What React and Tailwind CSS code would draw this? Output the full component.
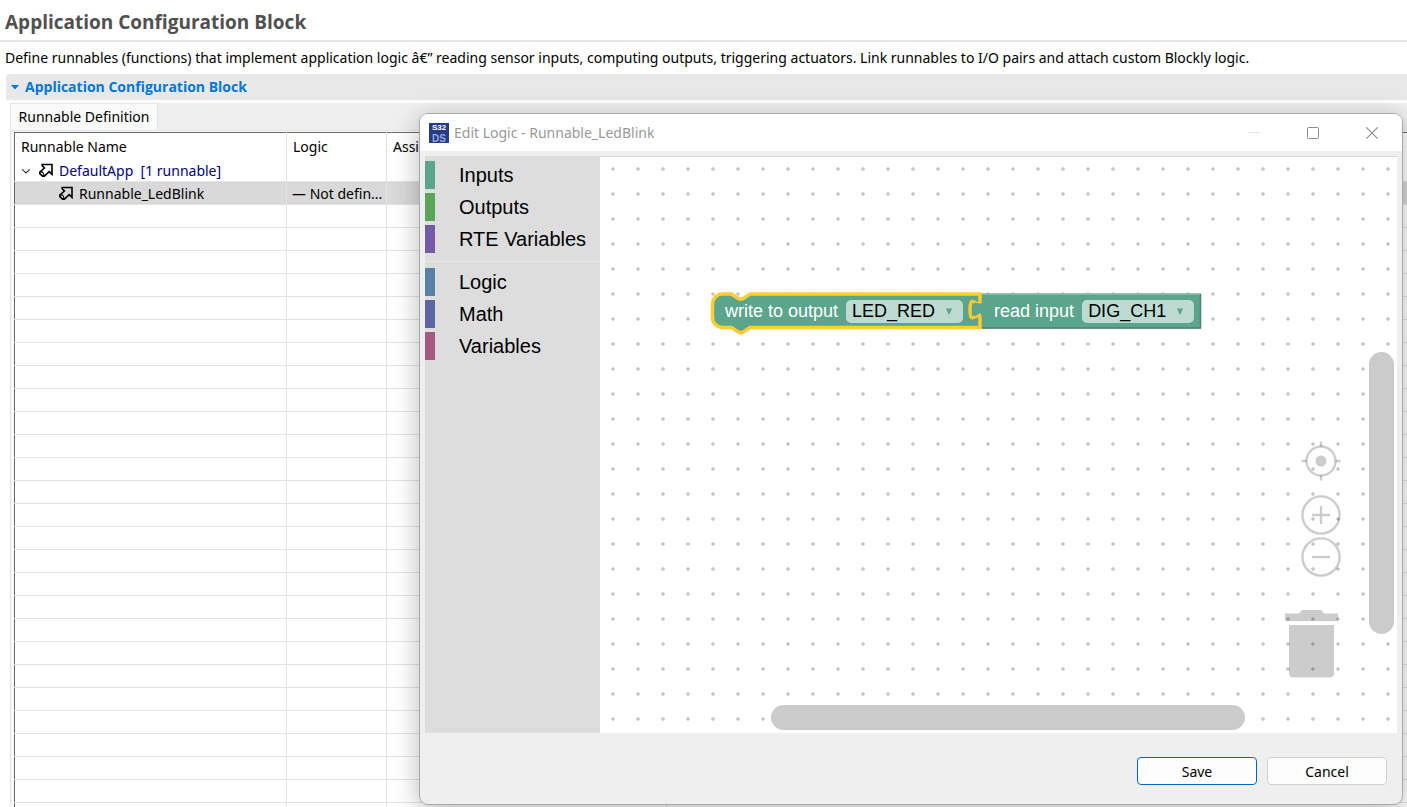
const UI = "font-['Noto_Sans','Open_Sans',sans-serif]";
const HEADING = "font-['Open_Sans','Noto_Sans',sans-serif]";
const BLOCK = "font-['Liberation_Sans',Arial,sans-serif]";

const inputs = [
  { name: "Inputs", color: "bg-[#5ba58c]" },
  { name: "Outputs", color: "bg-[#5ba55b]" },
  { name: "RTE Variables", color: "bg-[#745ba5]" },
];
const general = [
  { name: "Logic", color: "bg-[#5b80a5]" },
  { name: "Math", color: "bg-[#5b67a5]" },
  { name: "Variables", color: "bg-[#a55b80]" },
];

function RunnableIcon() {
  return (
    <svg className="size-4 shrink-0" viewBox="0 1 16 16" fill="none" stroke="#000" strokeWidth="1.6" aria-hidden="true">
      <path d="M4.200 2.500H14V12.400L11.200 9.700L6.400 14.200H4.600L1.800 11.600V10.200L6.400 6L4.200 3.700Z" />
      <path d="M2 10.200Q4.200 9.400 5.200 11Q6.200 12.400 5.600 14" strokeWidth="1.100" />
    </svg>
  );
}

function AppLogo() {
  return (
    <svg className="size-5 shrink-0" viewBox="0 0 20 20" aria-hidden="true">
      <rect width="20" height="20" fill="#263c86" />
      <text x="10" y="7" textAnchor="middle" fontSize="8" fontWeight="700" fill="#fff" fontFamily="Liberation Sans, sans-serif">S32</text>
      <text x="10" y="19" textAnchor="middle" fontSize="10" fontWeight="700" fill="#9aa9dc" fontFamily="Liberation Sans, sans-serif">DS</text>
    </svg>
  );
}

function Category({ name, color }) {
  return (
    <li>
      <button type="button" className="flex h-7 w-full items-center gap-6 text-left">
        <span className={`h-7 w-2.5 ${color}`} />
        <span>{name}</span>
      </button>
    </li>
  );
}

function Field({ label, value, width }) {
  return (
    <label className="flex items-center gap-2 whitespace-nowrap text-white">
      {label}
      <span className="relative block">
        <select className={`block h-[23px] appearance-none rounded-[5px] bg-[#bddbd1] pl-1.5 text-black ${width}`}>
          <option>{value}</option>
        </select>
        <svg className="pointer-events-none absolute right-2.5 top-2 h-2 w-2" viewBox="0 0 8 8" aria-hidden="true">
          <path d="M0.8 0.500H7.2L4 7Z" fill="#5ba58c" />
        </svg>
      </span>
    </label>
  );
}

function RunnableTable() {
  const cell = "border-r border-[#e3e3e3] px-1.5";
  return (
    <table className="w-full table-fixed border-collapse border-l border-t border-[#696969] bg-white">
      <colgroup>
        <col className="w-[272px]" />
        <col className="w-[100px]" />
        <col className="w-[280px]" />
        <col />
      </colgroup>
      <thead>
        <tr className="h-[26px] text-left">
          <th className={`${cell} pt-0.5 font-normal`}>Runnable Name</th>
          <th className={`${cell} pt-0.5 font-normal`}>Logic</th>
          <th className={`${cell} pt-0.5 font-normal`}>Assigned I/O</th>
          <th />
        </tr>
      </thead>
      <tbody>
        <tr className="h-[23px] border-b border-[#e3e3e3] text-[#000080]">
          <td className={cell}>
            <div className="flex h-[22px] items-center pt-0.5">
              <svg className="mr-[7px] size-2.5" viewBox="0 0 10 10" fill="none" stroke="#333" strokeWidth="1.2" aria-hidden="true">
                <path d="M1.2 3.4L5 7L8.8 3.4" />
              </svg>
              <RunnableIcon />
              <span className="ml-[5px] whitespace-pre">DefaultApp  [1 runnable]</span>
            </div>
          </td>
          <td className={cell} />
          <td className={cell} />
          <td />
        </tr>
        <tr className="h-[23px] border-b border-[#e3e3e3] bg-[#d9d9d9]">
          <td className={cell}>
            <div className="flex h-[22px] items-center pl-[37px] pt-0.5">
              <RunnableIcon />
              <span className="ml-[5px]">Runnable_LedBlink</span>
            </div>
          </td>
          <td className="whitespace-nowrap border-r border-[#e3e3e3] pl-[5px] pt-0.5">— Not defin...</td>
          <td className={cell} />
          <td />
        </tr>
        {Array.from({ length: 27 }, (_, i) => (
          <tr key={i} className="h-[23px] border-b border-[#e3e3e3]">
            <td className={cell} />
            <td className={cell} />
            <td className={cell} />
            <td />
          </tr>
        ))}
      </tbody>
    </table>
  );
}

function Blocks() {
  return (
    <div className={`absolute left-[110px] top-[133px] text-[18px] leading-[23px] ${BLOCK}`}>
      <svg className="absolute left-0 top-0 h-[46px] w-[494px]" viewBox="0 0 494 46" aria-hidden="true">
        <path d="M2.500 14A10 10 0 0 1 12.500 4H21.500L29 9H32.500L40 4H270V37.500H40L32.500 42.500H29L21.500 37.500H12.500A10 10 0 0 1 2.500 27.500Z" fill="#5ba58c" />
        <path d="M270.500 3.500H491V38.500H270.500Z" fill="#5ba58c" />
        <path d="M272 4H490.500" stroke="#8cc0ae" strokeWidth="1.500" />
        <path d="M272 38H490.500V4" fill="none" stroke="#498470" strokeWidth="1.500" />
        <path d="M2.500 14A10 10 0 0 1 12.500 4H21.500L29 9H32.500L40 4H270V10.250c0 12.500 -10 -10 -10 9.375s10 -3.125 10 9.375V37.500H40L32.500 42.500H29L21.500 37.500H12.500A10 10 0 0 1 2.500 27.500Z" fill="none" stroke="#fc3" strokeWidth="3.500" />
        <path d="M274 13.500H269L264.500 12.500Q262.500 16 263 21Q263.500 26 266 26L269 23.500H274Z" fill="#5ba58c" />
      </svg>
      <div className="relative flex items-start gap-[31px] pl-[15px] pt-2.5">
        <Field label="write to output" value="LED_RED" width="w-[117px]" />
        <Field label="read input" value="DIG_CH1" width="w-[112px]" />
      </div>
    </div>
  );
}

function Workspace() {
  return (
    <section aria-label="Workspace" className="relative min-w-0 flex-1 overflow-hidden border-t border-[#d5d5d5] bg-white">
      <svg className="absolute inset-0 size-full" aria-hidden="true">
        <defs>
          <pattern id="grid" width="25" height="25" patternUnits="userSpaceOnUse">
            <path d="M11 12H15M13 10V14" stroke="#d6d6d6" strokeWidth="2" />
            <path d="M12 12H14" stroke="#c6c6c6" strokeWidth="2" />
          </pattern>
        </defs>
        <rect width="100%" height="100%" fill="url(#grid)" />
      </svg>
      <Blocks />
      <div className="absolute right-[3px] top-[195px] h-[282px] w-[25px] rounded-full bg-[#cbcbcb]" />
      <div className="absolute bottom-[3px] left-[171px] h-[25px] w-[474px] rounded-full bg-[#cbcbcb]" />
      <div className="absolute bottom-[55px] right-[56px] flex flex-col items-end text-black/20">
        <button type="button" aria-label="Center" className="size-10">
          <svg viewBox="0 0 40 40" fill="none" stroke="currentColor" strokeWidth="2.4">
            <circle cx="20" cy="20" r="14.500" />
            <circle cx="20" cy="20" r="5.500" fill="currentColor" stroke="none" />
            <path d="M20 0.500V5.500M20 34.500V39.500M0.500 20H5.500M34.500 20H39.500" />
          </svg>
        </button>
        <button type="button" aria-label="Zoom in" className="mt-3.5 size-10">
          <svg viewBox="0 0 40 40" fill="none" stroke="currentColor" strokeWidth="2.4">
            <circle cx="20" cy="20" r="18.600" />
            <path d="M11 20H29M20 11V29" />
          </svg>
        </button>
        <button type="button" aria-label="Zoom out" className="mt-[2px] size-10">
          <svg viewBox="0 0 40 40" fill="none" stroke="currentColor" strokeWidth="2.4">
            <circle cx="20" cy="20" r="18.600" />
            <path d="M11 20H29" />
          </svg>
        </button>
        <svg className="mr-[3px] mt-[33px] h-[68px] w-[53px]" viewBox="0 0 53 68" fill="currentColor" aria-hidden="true">
          <path d="M0 3.500H14L17 0H36L39 3.500H53V11H0Z" />
          <path d="M4 15H49V63Q49 67.500 44.500 67.500H8.500Q4 67.500 4 63Z" />
        </svg>
      </div>
    </section>
  );
}

function LogicDialog() {
  return (
    <div role="dialog" aria-labelledby="dialog-title" className="absolute bottom-[2px] left-[419px] right-1 top-[113px] flex flex-col overflow-hidden rounded-[9px] border border-[#a9a9a9] bg-[#efefef] shadow-[0_6px_26px_rgba(0,0,0,0.28)]">
      <header className="flex h-[37px] shrink-0 items-center bg-white pl-[9px] pr-6">
        <AppLogo />
        <h2 id="dialog-title" className="ml-[5px] flex-1 text-[14px] text-[#999]">Edit Logic - Runnable_LedBlink</h2>
        <div className="flex gap-[47px] text-[#8c8c8c]">
          <button type="button" aria-label="Minimize" className="size-3">
            <svg viewBox="0 0 12 12" stroke="#e6e6e6"><path d="M0 5.500H12" /></svg>
          </button>
          <button type="button" aria-label="Maximize" className="size-3">
            <svg viewBox="0 0 12 12" fill="none" stroke="currentColor"><rect x="0.500" y="0.500" width="11" height="11" rx="1" /></svg>
          </button>
          <button type="button" aria-label="Close" className="size-3">
            <svg viewBox="0 0 12 12" stroke="currentColor" strokeWidth="1.100"><path d="M0.300 0.300L11.700 11.700M11.700 0.300L0.300 11.700" /></svg>
          </button>
        </div>
      </header>
      <div className="mx-[5px] mt-[5px] flex min-h-0 flex-1">
        <nav aria-label="Block categories" className={`w-[175px] shrink-0 bg-[#ddd] pt-[5px] text-[20px] leading-7 text-black ${BLOCK}`}>
          <ul className="flex flex-col gap-1">
            {inputs.map((c) => <Category key={c.name} {...c} />)}
          </ul>
          <hr className="mb-1.5 mt-2 border-[#e8e8e8]" />
          <ul className="flex flex-col gap-1">
            {general.map((c) => <Category key={c.name} {...c} />)}
          </ul>
        </nav>
        <Workspace />
      </div>
      <footer className="flex shrink-0 justify-end gap-2.5 pb-[19px] pr-[15px] pt-6 text-[14px]">
        <button type="button" className="h-7 w-[120px] rounded border border-[#0067c0] bg-[#fdfdfd] pt-0.5">Save</button>
        <button type="button" className="h-7 w-[120px] rounded border border-[#d0d0d0] bg-[#fdfdfd] pt-0.5">Cancel</button>
      </footer>
    </div>
  );
}

export default function App() {
  return (
    <div className={`relative flex h-screen flex-col overflow-hidden bg-white text-[14px] leading-5 text-black ${UI}`}>
      <h1 className={`h-[42px] shrink-0 border-b-2 border-[#e5e5e5] pl-[5px] pt-2 text-[19px] font-bold leading-7 text-[#505050] ${HEADING}`}>
        Application Configuration Block
      </h1>
      <p className="shrink-0 whitespace-nowrap pl-[5px] pt-[6px]">
        Define runnables (functions) that implement application logic â€” reading sensor inputs, computing outputs, triggering actuators. Link runnables to I/O pairs and attach custom Blockly logic.
      </p>
      <section className="ml-1.5 mt-1.5 flex flex-col">
        <h2 className={`h-[26px] rounded-tl-sm bg-[#e8e8e8] ${HEADING}`}>
          <button type="button" className="flex h-full items-center gap-1.5 pl-[5px] font-bold text-[#0078d7]">
            <svg className="h-2 w-2" viewBox="0 0 8 8" aria-hidden="true"><path d="M0 2H8L4 6.500Z" fill="#0078d7" /></svg>
            Application Configuration Block
          </button>
        </h2>
        <div className="ml-1 mt-[3px] border-l border-[#e5e5e5] bg-[#fafafa]">
          <div role="tablist" className="flex border-b border-[#e5e5e5] bg-[#efefef]">
            <button type="button" role="tab" aria-selected="true" className="h-[27px] w-[147px] whitespace-nowrap border-r border-t border-[#e5e5e5] bg-[#fafafa] text-center">
              Runnable Definition
            </button>
          </div>
          <div className="pl-[3px] pt-px">
            <RunnableTable />
          </div>
        </div>
      </section>
      <LogicDialog />
    </div>
  );
}
